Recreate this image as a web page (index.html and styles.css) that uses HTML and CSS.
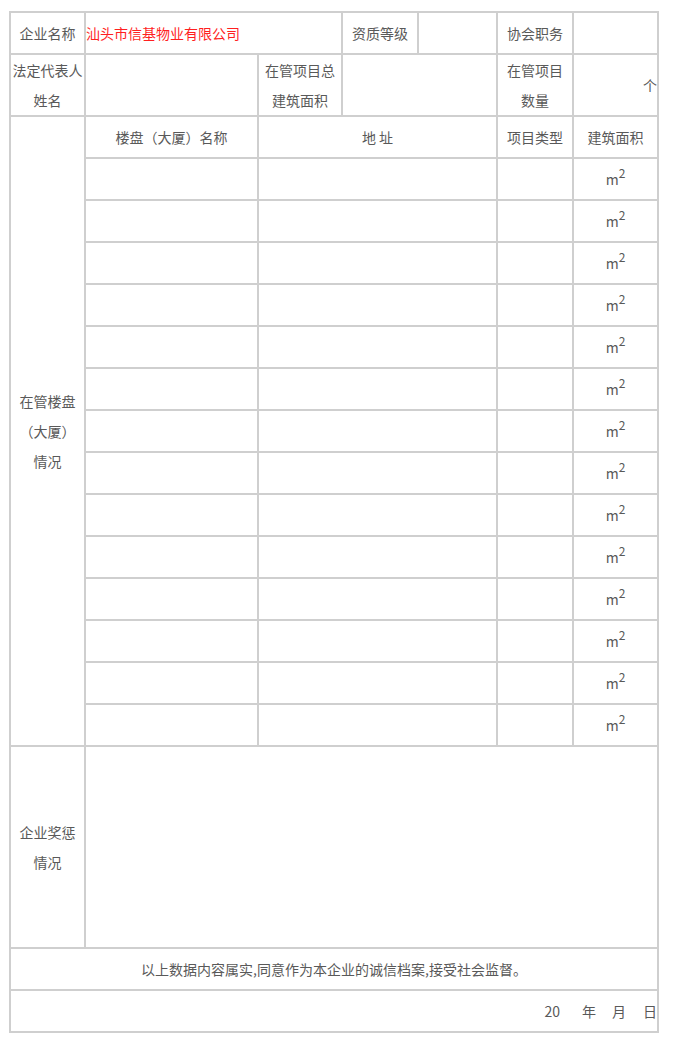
FILE: index.html
```html
<!DOCTYPE html>
<html lang="zh-CN">
<head>
  <meta charset="UTF-8" />
  <meta name="viewport" content="width=device-width, initial-scale=1.0" />
  <title>企业诚信档案</title>
  <link rel="stylesheet" href="styles.css">
</head>
<body>
  <div class="page">
    <table class="sheet">
      <colgroup>
        <col class="c1"><col class="c2"><col class="c3"><col class="c4"><col class="c5"><col class="c6"><col class="c7">
      </colgroup>
      <tr>
        <td>企业名称</td>
        <td colspan="2" class="left company">汕头市信基物业有限公司</td>
        <td>资质等级</td>
        <td></td>
        <td>协会职务</td>
        <td></td>
      </tr>
      <tr class="tall">
        <td>法定代表人<br>姓名</td>
        <td></td>
        <td>在管项目总<br>建筑面积</td>
        <td colspan="2"></td>
        <td>在管项目<br>数量</td>
        <td class="right">个</td>
      </tr>
      <tr>
        <td rowspan="15">在管楼盘<br>（大厦）<br>情况</td>
        <td>楼盘（大厦）名称</td>
        <td colspan="3">地 址</td>
        <td>项目类型</td>
        <td>建筑面积</td>
      </tr>
      <script>
        for (let i = 0; i < 14; i++) {
          document.write('<tr><td></td><td colspan="3"></td><td></td><td class="unit">m<sup>2</sup></td></tr>');
        }
      </script>
      <tr class="awards">
        <td>企业奖惩<br>情况</td>
        <td colspan="6"></td>
      </tr>
      <tr>
        <td colspan="7" class="note">以上数据内容属实,同意作为本企业的诚信档案,接受社会监督。</td>
      </tr>
      <tr>
        <td colspan="7" class="right date">20<span>年</span><span class="m">月</span><span class="d">日</span></td>
      </tr>
    </table>
  </div>
</body>
</html>
```

FILE: styles.css
```css
body {
  margin: 0;
  background: #fff;
  font-family: "Noto Sans CJK SC", "Noto Sans", sans-serif;
  font-size: 14px;
  color: #595959;
}
.page {
  padding: 11px 0 0 9px;
}
.sheet {
  border-collapse: collapse;
  table-layout: fixed;
  width: 650px;
}
.c1 { width: 75px; }
.c2 { width: 173px; }
.c3 { width: 84px; }
.c4 { width: 76px; }
.c5 { width: 79px; }
.c6 { width: 76px; }
.c7 { width: 85px; }
.sheet td {
  border: 2px solid #cfcfcf;
  height: 40px;
  padding: 0;
  line-height: 30px;
  text-align: center;
  vertical-align: middle;
  white-space: nowrap;
}
.sheet .left {
  text-align: left;
}
.sheet .right {
  text-align: right;
}
.company {
  color: #ff1f1f;
}
.awards td {
  height: 200px;
}
.unit sup {
  font-size: 12px;
  line-height: 0;
  vertical-align: 7px;
}
.date span {
  margin-left: 22px;
}
.date span.m {
  margin-left: 16px;
}
.date span.d {
  margin-left: 17px;
}
```
